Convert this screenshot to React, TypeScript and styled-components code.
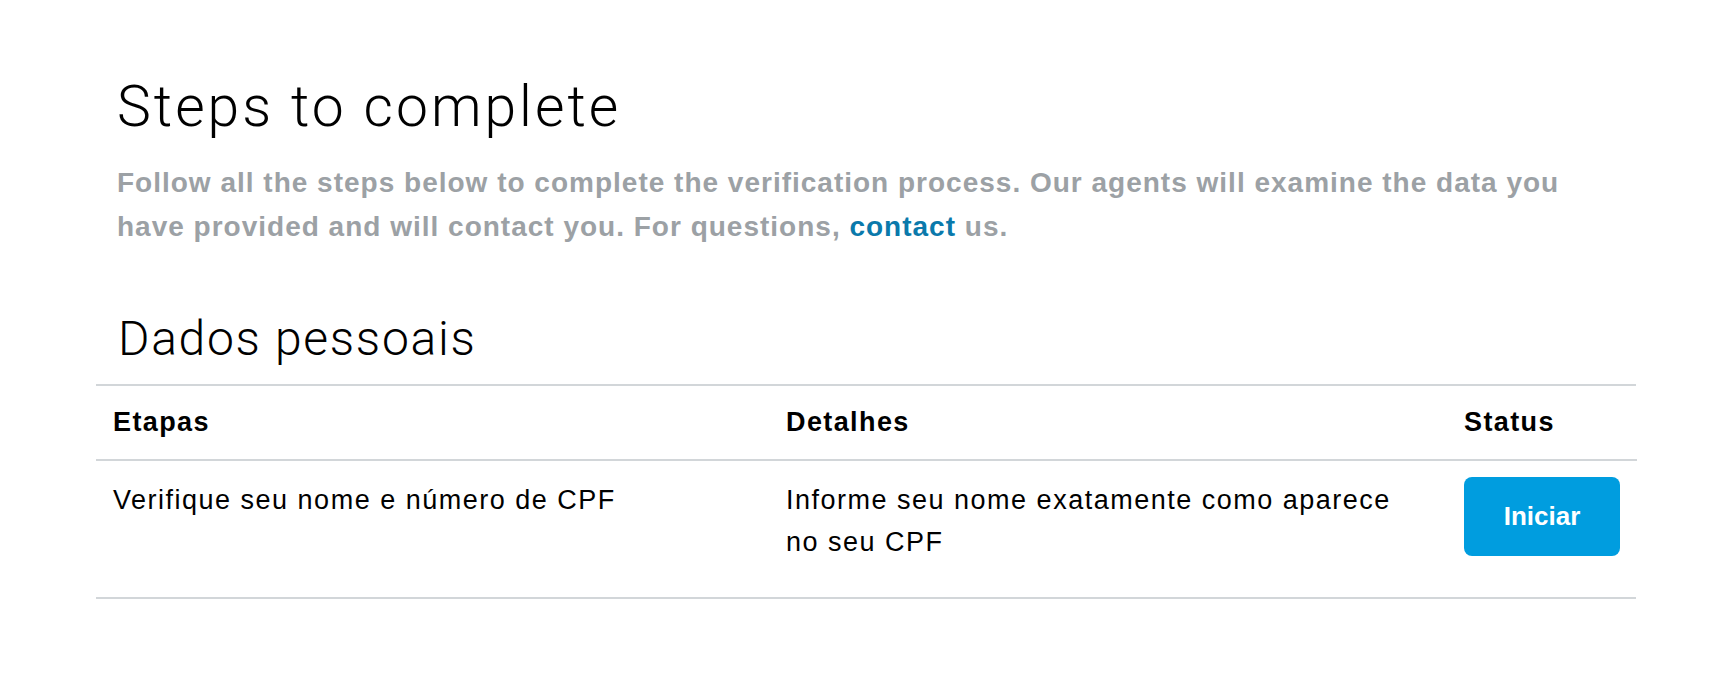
import styled, { createGlobalStyle } from "styled-components";

const GlobalStyle = createGlobalStyle`
  html, body {
    margin: 0;
    padding: 0;
    background: #fff;
  }
  body {
    font-family: "Liberation Sans", Arial, sans-serif;
    color: #000;
  }
`;

type Step = {
  title: string;
  details: string;
};

const steps: Step[] = [
  {
    title: "Verifique seu nome e número de CPF",
    details: "Informe seu nome exatamente como aparece no seu CPF",
  },
];

function App(): JSX.Element {
  return (
    <>
      <GlobalStyle />
      <Page>
        <Intro>
          <Title>Steps to complete</Title>
          <Lead>
            Follow all the steps below to complete the verification process. Our agents will examine the data you
            have provided and will contact you. For questions, <Link href="#">contact</Link> us.
          </Lead>
        </Intro>

        <Section>
          <SectionTitle>Dados pessoais</SectionTitle>
          <Table>
            <HeadCell>Etapas</HeadCell>
            <HeadCell>Detalhes</HeadCell>
            <HeadCell>Status</HeadCell>
            {steps.map((step) => (
              <Row key={step.title}>
                <Cell>{step.title}</Cell>
                <Cell>{step.details}</Cell>
                <ActionCell>
                  <StartButton>Iniciar</StartButton>
                </ActionCell>
              </Row>
            ))}
          </Table>
        </Section>
      </Page>
    </>
  );
}

export default App;

const Page = styled.div`
  padding: 74px 98px 60px 96px;
`;

const Intro = styled.div`
  padding-left: 21px;
`;

const Title = styled.h1`
  margin: 0;
  font-family: Roboto, "Liberation Sans", sans-serif;
  font-weight: 300;
  font-size: 57px;
  line-height: 65px;
  letter-spacing: 3px;
`;

const Lead = styled.p`
  margin: 22px 0 0;
  max-width: 1470px;
  font-size: 28px;
  font-weight: 700;
  line-height: 44px;
  letter-spacing: 1px;
  color: #9ca1a5;
`;

const Link = styled.a`
  color: #0a79ab;
  text-decoration: none;
`;

const Section = styled.section`
  margin-top: 62px;
`;

const SectionTitle = styled.h2`
  margin: 0 0 17px 22px;
  font-family: Roboto, "Liberation Sans", sans-serif;
  font-weight: 300;
  font-size: 48px;
  line-height: 56px;
  letter-spacing: 1.7px;
`;

const Table = styled.div`
  display: grid;
  grid-template-columns: 673px 678px 1fr;
  border-top: 2px solid #d2d6d9;
  border-bottom: 2px solid #d2d6d9;
`;

const HeadCell = styled.div`
  display: flex;
  align-items: center;
  height: 73px;
  padding: 0 17px;
  font-size: 27px;
  font-weight: 700;
  letter-spacing: 1.4px;
  border-bottom: 2px solid #d2d6d9;
`;

const Row = styled.div`
  display: contents;
`;

const Cell = styled.div`
  padding: 18px 40px 34px 17px;
  font-size: 27px;
  line-height: 42px;
  letter-spacing: 1.5px;
`;

const ActionCell = styled.div`
  padding: 16px 17px 36px;
`;

const StartButton = styled.button`
  width: 156px;
  height: 79px;
  border: none;
  border-radius: 8px;
  background: #009ddf;
  color: #fff;
  font-family: "Liberation Sans", Arial, sans-serif;
  font-size: 26px;
  font-weight: 700;
  cursor: pointer;
`;
